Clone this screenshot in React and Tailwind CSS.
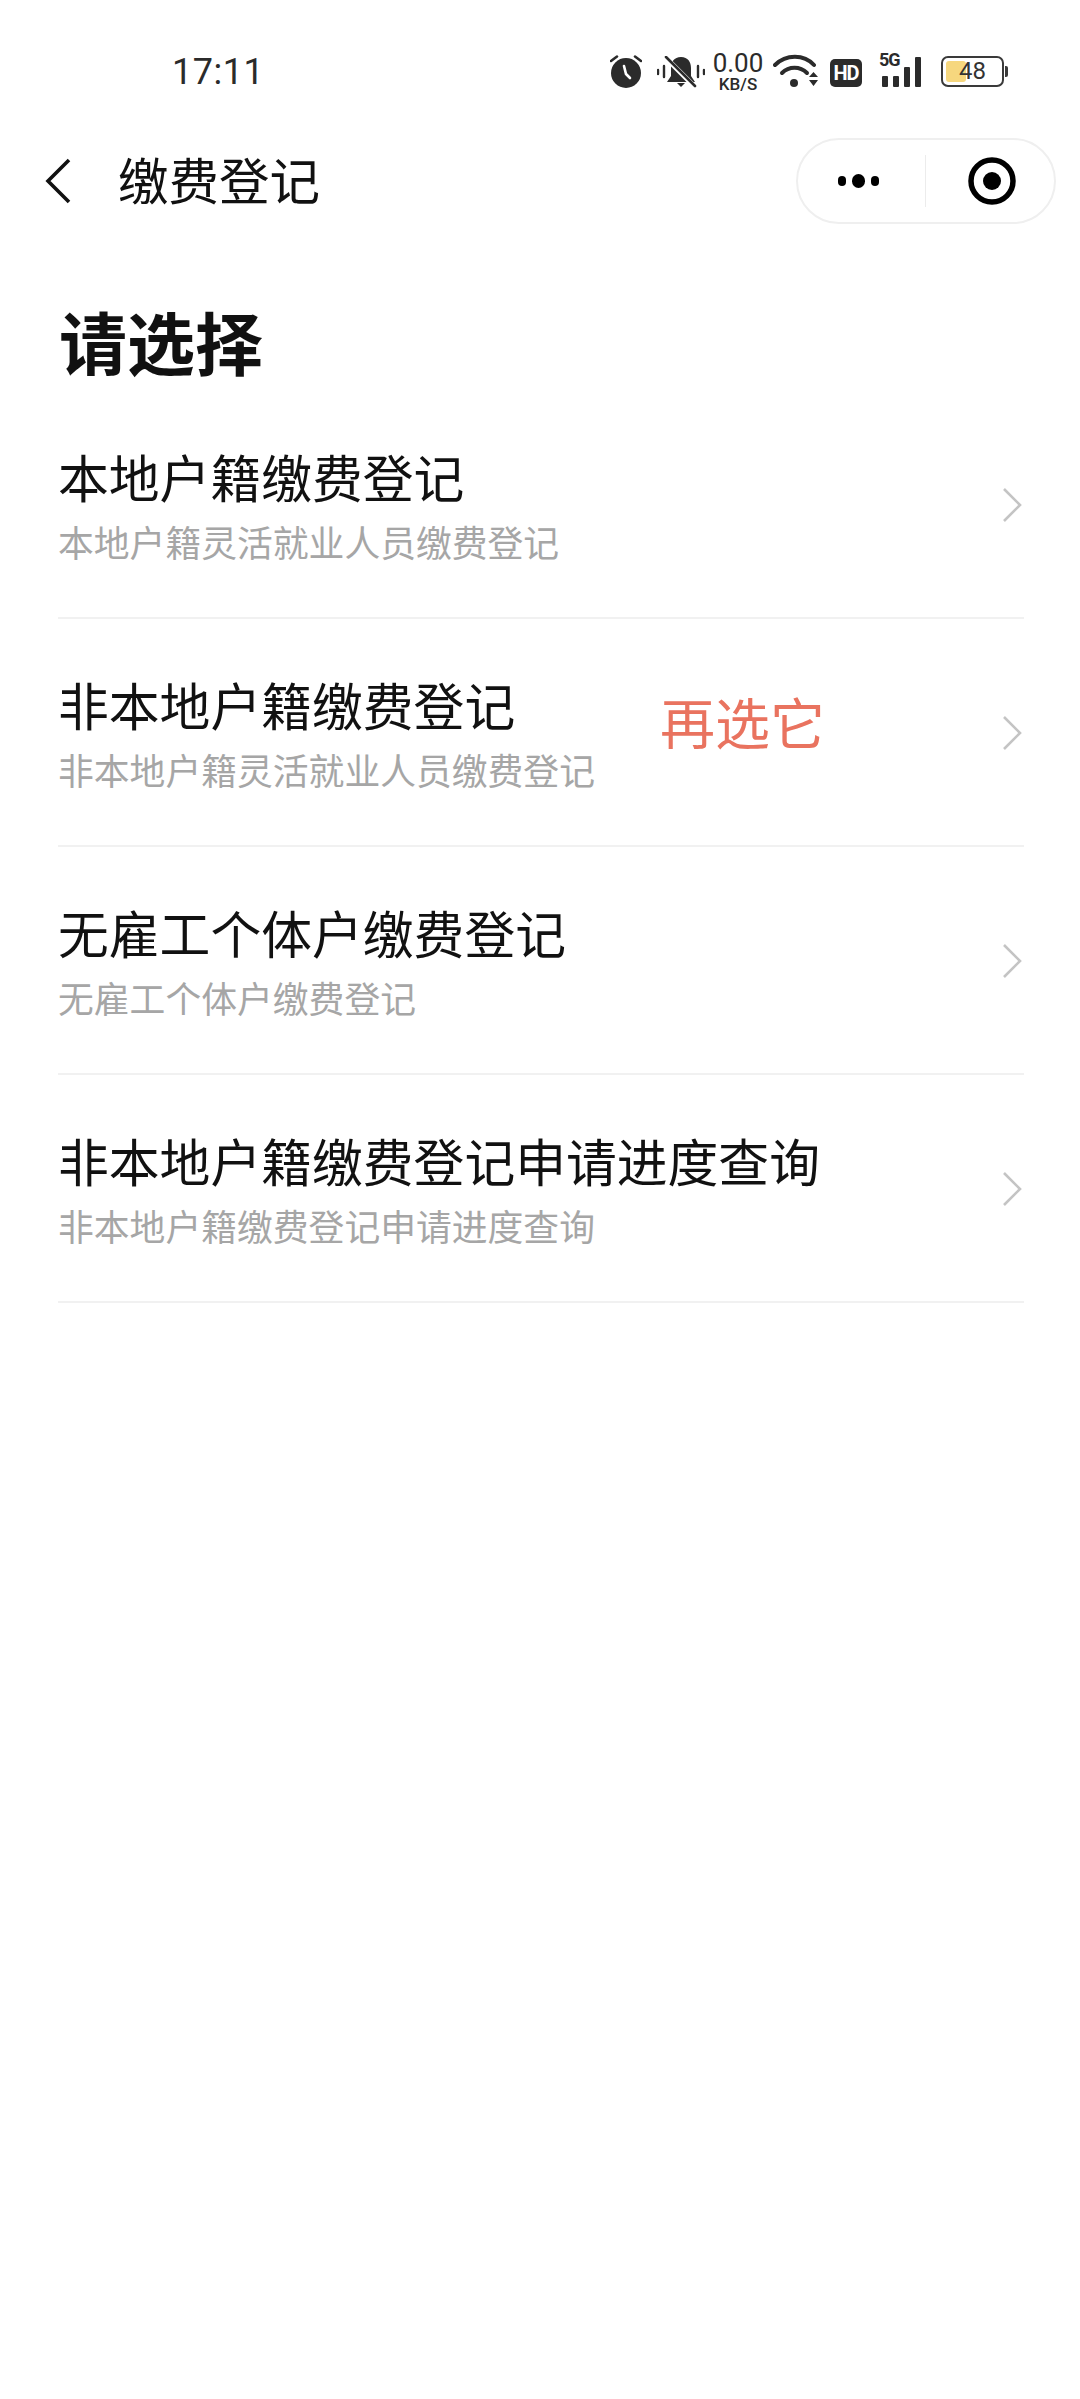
const rows = [
  { title: "本地户籍缴费登记", sub: "本地户籍灵活就业人员缴费登记" },
  { title: "非本地户籍缴费登记", sub: "非本地户籍灵活就业人员缴费登记", note: "再选它" },
  { title: "无雇工个体户缴费登记", sub: "无雇工个体户缴费登记" },
  { title: "非本地户籍缴费登记申请进度查询", sub: "非本地户籍缴费登记申请进度查询" },
];

const AlarmIcon = () => (
  <svg width="32" height="34" viewBox="0 0 32 34">
    <circle cx="16" cy="19" r="15" fill="#2b2b2b" />
    <path d="M1 7l6-4.5M31 7l-6-4.5" stroke="#2b2b2b" strokeWidth="2.6" strokeLinecap="round" />
    <path d="M14 12l2 8 4 4" stroke="#fff" strokeWidth="2.6" fill="none" strokeLinecap="round" />
  </svg>
);

const BellOffIcon = () => (
  <svg width="48" height="32" viewBox="0 0 48 32">
    <path d="M24 1c7 0 10 5 10 11v8l4 6H10l4-6v-8c0-6 3-11 10-11z" fill="#2b2b2b" />
    <path d="M20 27h8l-4 4z" fill="#2b2b2b" />
    <path d="M10 3l26 26" stroke="#fff" strokeWidth="5" />
    <path d="M9 1l29 29" stroke="#2b2b2b" strokeWidth="2.6" strokeLinecap="round" />
    <path d="M1 14v4M7 10v11M41 10v11M47 14v4" stroke="#2b2b2b" strokeWidth="2.4" strokeLinecap="round" />
  </svg>
);

const WifiIcon = () => (
  <svg width="46" height="34" viewBox="0 0 46 34">
    <path d="M2 11c11-11 29-11 39 0" stroke="#2b2b2b" strokeWidth="4" fill="none" strokeLinecap="round" />
    <path d="M9 19c7-7 18-7 25 0" stroke="#2b2b2b" strokeWidth="4" fill="none" strokeLinecap="round" />
    <circle cx="21" cy="29" r="4" fill="#2b2b2b" />
    <path d="M36 23h9l-4.5-5zM36 26h9l-4.5 6z" fill="#2b2b2b" />
  </svg>
);

const SignalIcon = () => (
  <div className="flex items-end gap-[5px] h-[31px]">
    <div className="w-[6px] h-[11px] bg-[#2b2b2b] rounded-[1px]" />
    <div className="w-[6px] h-[11px] bg-[#2b2b2b] rounded-[1px]" />
    <div className="w-[6px] h-[20px] bg-[#2b2b2b] rounded-[1px]" />
    <div className="w-[6px] h-[30px] bg-[#2b2b2b] rounded-[1px]" />
  </div>
);

const StatusBar = () => (
  <div className="h-[127px] pt-[54px] flex items-start text-[#2b2b2b]">
    <div className="ml-[172px] w-[92px] text-[36px] leading-[36px] tracking-[0.5px] font-['Roboto',sans-serif]">17:11</div>
    <div className="ml-[346px]"><AlarmIcon /></div>
    <div className="ml-[15px] mt-[2px]"><BellOffIcon /></div>
    <div className="ml-[6px] w-[54px] flex flex-col items-center font-['Roboto',sans-serif]">
      <div className="text-[26px] leading-[20px] mt-[-1px]">0.00</div>
      <div className="text-[17px] leading-[16px] mt-[3px] font-medium">KB/S</div>
    </div>
    <div className="ml-[8px]"><WifiIcon /></div>
    <div className="ml-[11px] mt-[5px] w-[32px] h-[28px] rounded-[5px] bg-[#2b2b2b] text-white text-[20px] leading-[28px] text-center font-bold tracking-[-1px] font-['Roboto',sans-serif]">HD</div>
    <div className="ml-[17px] relative w-[46px] h-[33px]">
      <div className="absolute left-0 top-[-3px] text-[18px] leading-[18px] font-bold tracking-[-1px] font-['Roboto',sans-serif]">5G</div>
      <div className="absolute left-[3px] bottom-0"><SignalIcon /></div>
    </div>
    <div className="ml-[16px] mt-[2px] flex items-center">
      <div className="relative w-[63px] h-[31px] rounded-[7px] border-2 border-[#3a3a3a] p-[3px]">
        <div className="w-[20px] h-full rounded-[3px] bg-[#f6d77e]" />
        <div className="absolute inset-0 text-center text-[24px] leading-[27px] text-[#333] font-['Roboto',sans-serif]">48</div>
      </div>
      <div className="ml-[1px] w-[3px] h-[11px] rounded-r-[2px] bg-[#3a3a3a]" />
    </div>
  </div>
);

const NavBar = () => (
  <div className="h-[108px] flex items-center justify-between pr-[24px]">
    <div className="flex items-center">
      <svg className="ml-[44px]" width="28" height="48" viewBox="0 0 28 48">
        <path d="M25 3L4 24l21 21" stroke="#111" strokeWidth="3.6" fill="none" />
      </svg>
      <div className="ml-[46px] mt-[-6px] text-[50.5px] leading-[60px] text-[#111]">缴费登记</div>
    </div>
    <div className="w-[260px] h-[86px] rounded-full border-2 border-[#efefef] flex items-center">
      <div className="flex-1 flex items-center justify-center gap-[6px] pr-[6px]">
        <span className="w-[8px] h-[10px] rounded-full bg-black" />
        <span className="w-[13px] h-[14px] rounded-full bg-black" />
        <span className="w-[8px] h-[10px] rounded-full bg-black" />
      </div>
      <div className="w-[1px] h-[52px] bg-[#ececec]" />
      <div className="w-[128px] flex justify-center pl-[4px]">
        <svg width="50" height="50" viewBox="0 0 50 50">
          <circle cx="25" cy="25" r="21" stroke="#000" strokeWidth="5.5" fill="none" />
          <circle cx="25" cy="25" r="9" fill="#000" />
        </svg>
      </div>
    </div>
  </div>
);

const Row = ({ title, sub, note }) => (
  <div className="relative h-[228px] pt-[55px] border-b-2 border-[#f1f1f1] flex items-start justify-between">
    <div>
      <div className="text-[50.8px] leading-[60px] text-[#111]">{title}</div>
      <div className="mt-[13px] text-[35.8px] leading-[44px] text-[#a6a6a6]">{sub}</div>
    </div>
    {note && (
      <div className="absolute left-[602px] top-[66px] text-[55px] leading-[70px] text-[#e9735f]">{note}</div>
    )}
    <svg className="mt-[41px] mr-[2px]" width="20" height="36" viewBox="0 0 20 36">
      <path d="M2 2l16 16L2 34" stroke="#c4c4c4" strokeWidth="2.6" fill="none" />
    </svg>
  </div>
);

export default function App() {
  return (
    <div className="min-h-[2399px] bg-white font-['Noto_Sans_CJK_SC','Liberation_Sans',sans-serif]">
      <StatusBar />
      <NavBar />
      <div className="pl-[58px] pr-[56px] pt-[64px]">
        <div className="ml-[1px] text-[68px] leading-[84px] font-bold text-[#111]">请选择</div>
        <div className="mt-[8px]">
          {rows.map((row) => (
            <Row key={row.title} {...row} />
          ))}
        </div>
      </div>
    </div>
  );
}
